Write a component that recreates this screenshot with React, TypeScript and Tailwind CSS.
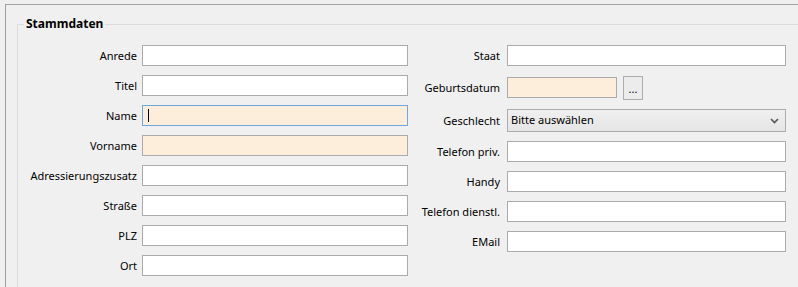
import React from "react";

const font = { fontFamily: '"Noto Sans", "Open Sans", sans-serif' };

function Label({ text, w }: { text: string; w: string }) {
  return <div className={`${w} shrink-0 text-right text-[11px] leading-none text-black`}>{text}</div>;
}

function Input({ w, peach, focus }: { w: string; peach?: boolean; focus?: boolean }) {
  return (
    <div
      className={`${w} h-[21px] border ${focus ? "border-[#6ea6df]" : "border-[#ababab]"} ${
        peach ? "bg-[#fdeedb]" : "bg-white"
      } relative flex items-center`}
    >
      {focus && <div className="ml-[5px] h-[13px] w-px bg-black" />}
    </div>
  );
}

function LeftRow({ label, peach, focus }: { label: string; peach?: boolean; focus?: boolean }) {
  return (
    <div className="flex h-[21px] items-center gap-[5px]">
      <Label text={label} w="w-[119px]" />
      <Input w="w-[266px]" peach={peach} focus={focus} />
    </div>
  );
}

function RightRow({ label, children, h = "h-[21px]" }: { label: string; children?: React.ReactNode; h?: string }) {
  return (
    <div className={`flex ${h} items-center gap-[7px]`}>
      <Label text={label} w="w-[92px]" />
      {children ?? <Input w="w-[279px]" />}
    </div>
  );
}

export default function App() {
  return (
    <div className="h-[287px] w-[798px] overflow-hidden bg-[#f0f0f0] pl-[5px] pt-[4px]" style={font}>
      <div className="h-full border-l border-t border-[#a0a0a0] pl-[11px] pt-[19px]">
        <div className="relative h-full border-l border-t border-[#dcdcdc]">
          <div className="absolute -top-[9px] left-[6px] bg-[#f0f0f0] px-[2px] text-[12px] font-bold leading-[16px] text-black">
            Stammdaten
          </div>
          <div className="flex pt-[20px]">
            <div className="flex flex-col gap-[9px]">
              <LeftRow label="Anrede" />
              <LeftRow label="Titel" />
              <LeftRow label="Name" peach focus />
              <LeftRow label="Vorname" peach />
              <LeftRow label="Adressierungszusatz" />
              <LeftRow label="Straße" />
              <LeftRow label="PLZ" />
              <LeftRow label="Ort" />
            </div>
            <div className="flex flex-col gap-[9px]">
              <RightRow label="Staat" />
              <RightRow label="Geburtsdatum" h="h-[25px]">
                <div className="flex items-center gap-[6px]">
                  <Input w="w-[110px]" peach />
                  <div className="flex h-[24px] w-[20px] items-end justify-center border border-[#adadad] bg-[#ececec] pb-[5px] text-[11px] leading-none text-black">
                    ...
                  </div>
                </div>
              </RightRow>
              <RightRow label="Geschlecht" h="h-[23px]">
                <div className="flex h-[23px] w-[279px] items-center justify-between border border-[#acacac] bg-gradient-to-b from-[#f0f0f0] to-[#e5e5e5] pl-[3px] pr-[6px] text-[11px] text-black">
                  <span>Bitte auswählen</span>
                  <svg width="9" height="6" viewBox="0 0 9 6">
                    <path d="M1 1 L4.5 4.5 L8 1" stroke="#555" strokeWidth="1.6" fill="none" />
                  </svg>
                </div>
              </RightRow>
              <RightRow label="Telefon priv." />
              <RightRow label="Handy" />
              <RightRow label="Telefon dienstl." />
              <RightRow label="EMail" />
            </div>
          </div>
        </div>
      </div>
    </div>
  );
}
